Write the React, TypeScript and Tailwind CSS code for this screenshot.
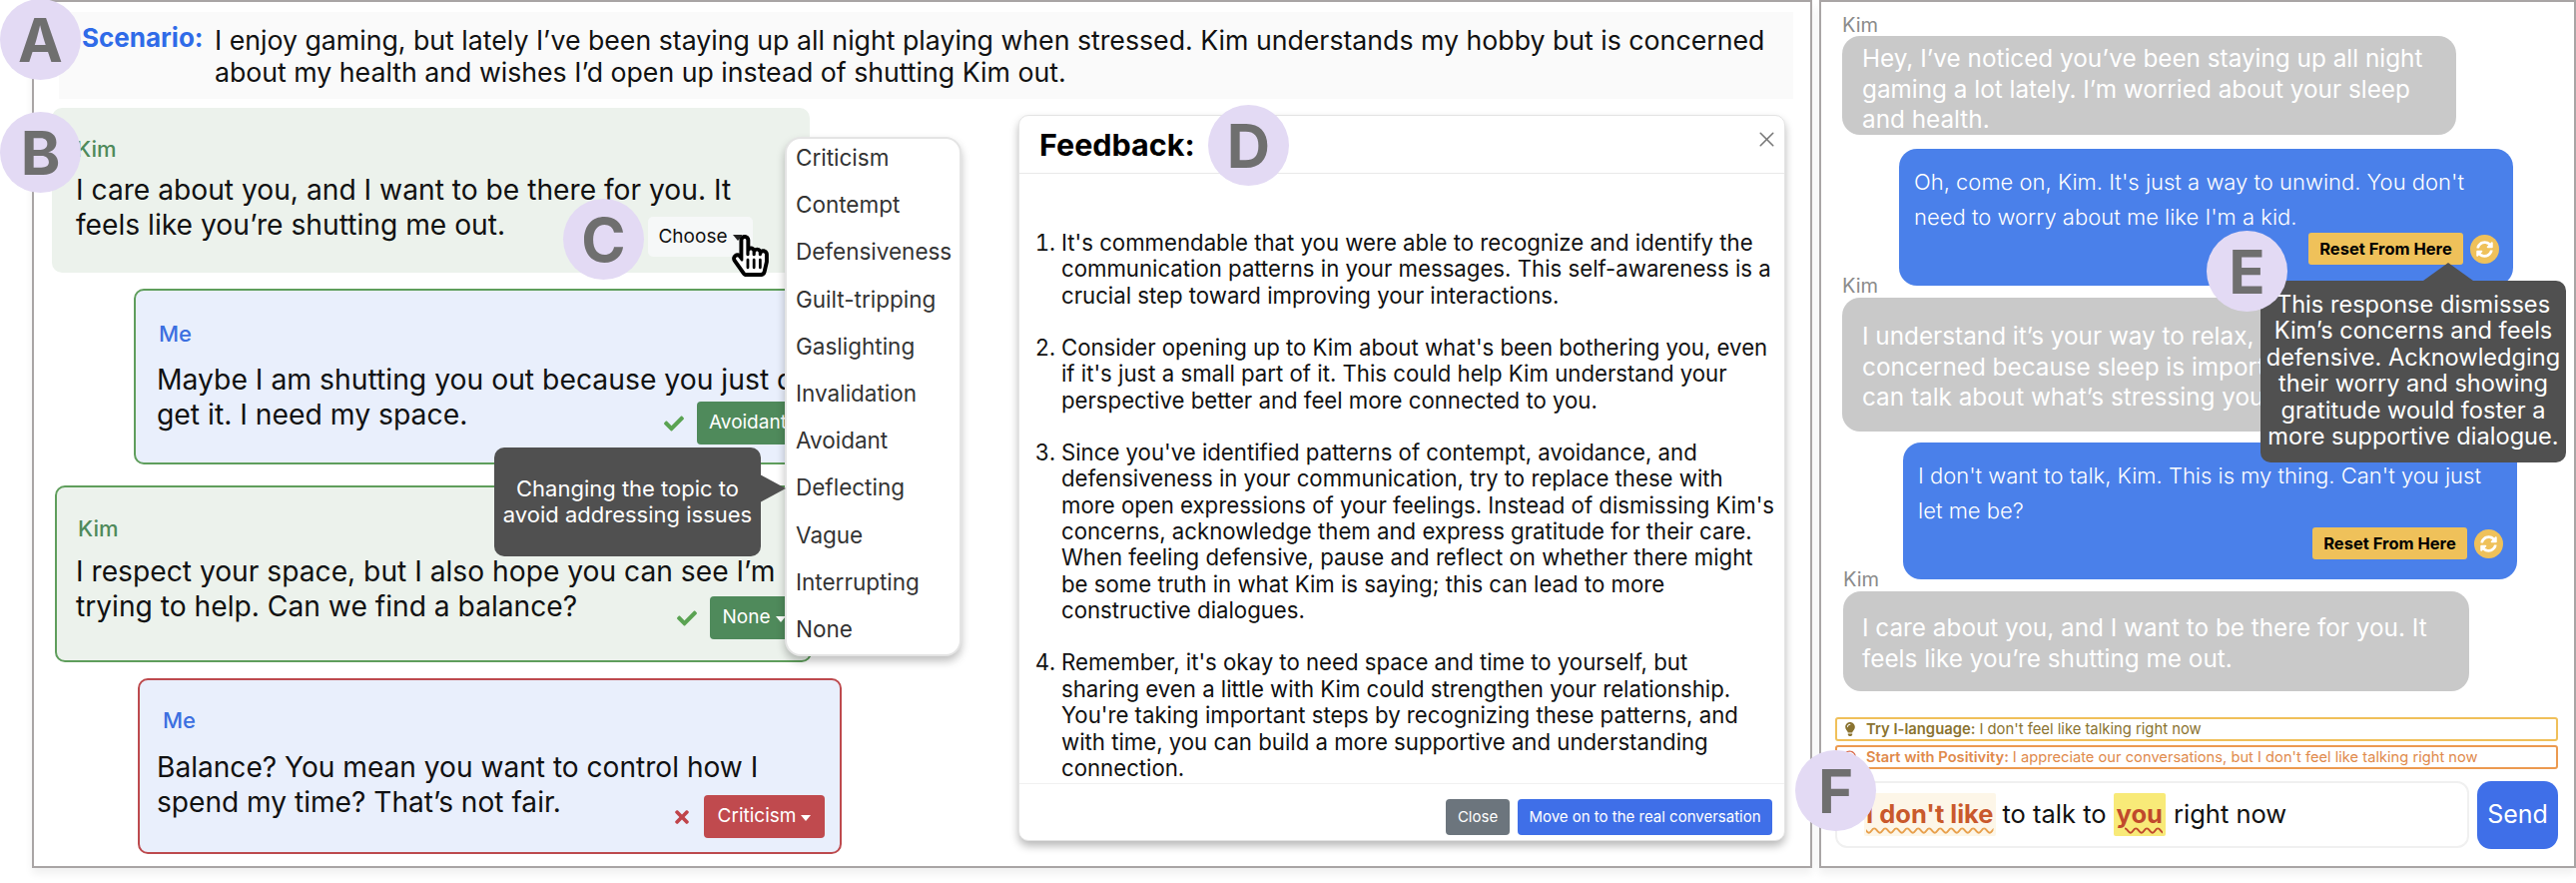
import { FaCheck, FaTimes, FaLightbulb, FaSyncAlt, FaRegSmile, FaHandPointer, FaRegHandPointer } from 'react-icons/fa'
import { X } from 'lucide-react'

const labels = ['Criticism', 'Contempt', 'Defensiveness', 'Guilt-tripping', 'Gaslighting', 'Invalidation', 'Avoidant', 'Deflecting', 'Vague', 'Interrupting', 'None']

function Badge({ letter, className }: { letter: string; className: string }) {
  return (
    <div className={`absolute z-30 flex h-[81px] w-[81px] items-center justify-center rounded-full bg-[#e3daf4] text-[60px] leading-none font-bold text-[#6f6f6f] ${className}`}>
      {letter}
    </div>
  )
}

function ResetRow({ className }: { className: string }) {
  return (
    <div className={`flex items-center justify-end gap-[7px] ${className}`}>
      <div className="flex h-[32px] w-[155px] items-center justify-center rounded-[3px] bg-[#efc15a] text-[16.5px] font-bold text-black">Reset From Here</div>
      <div className="flex h-[29px] w-[29px] items-center justify-center rounded-full bg-[#efc15a] text-white">
        <FaSyncAlt className="h-[17px] w-[17px]" />
      </div>
    </div>
  )
}

export default function App() {
  return (
    <div className="relative flex h-[884px] w-[2580px] gap-[7px] overflow-hidden bg-white pl-[32px] font-['Inter',sans-serif] text-[#111]">
      {/* Left panel: labelling and feedback */}
      <div className="flex h-[869px] w-[1783px] flex-col border-2 border-[#a9a5a5] shadow-[0_6px_8px_rgba(0,0,0,0.06)]">
        <div className="mt-[10px] ml-[25px] flex h-[87px] w-[1737px] bg-[#fafafa] pt-[12px] pl-[23px]">
          <div className="-mt-[2px] w-[133px] text-[26px] leading-[32px] font-bold text-[#2f6be8]">Scenario:</div>
          <div className="w-[1560px] text-[26.7px] leading-[32px]">
            I enjoy gaming, but lately I’ve been staying up all night playing when stressed. Kim understands my hobby but is concerned<br />about my health and wishes I’d open up instead of shutting Kim out.
          </div>
        </div>

        <div className="mt-[9px] flex">
          <div className="ml-[18px] flex w-[800px] flex-col">
            <div className="h-[165px] w-[759px] rounded-[10px] bg-[#ecf2ec] px-[24px] pt-[29px]">
              <div className="text-[22px] leading-[24px] font-medium text-[#4f8a5b]">Kim</div>
              <div className="mt-[12px] text-[28.2px] leading-[35px]">I care about you, and I want to be there for you. It<br />feels like you’re shutting me out.</div>
              <div className="-mt-[26px] flex justify-end pr-[33px]">
                <div className="flex h-[40px] w-[105px] items-center justify-center gap-[5px] rounded-[5px] bg-[#f6f8f8] text-[19px]">
                  Choose <span className="mt-[2px] border-x-[5px] border-t-[6px] border-x-transparent border-t-[#222]" />
                </div>
              </div>
            </div>

            <div className="mt-[16px] ml-[82px] h-[176px] w-[706px] rounded-[10px] border-2 border-[#5f9e5c] bg-[#e9effc] pt-[31px] pl-[21px]">
              <div className="ml-[2px] text-[22px] leading-[24px] font-medium text-[#3c6fe0]">Me</div>
              <div className="mt-[17px] text-[28.3px] leading-[35px] whitespace-nowrap">Maybe I am shutting you out because you just don’t<br />get it. I need my space.</div>
              <div className="-mt-[31px] flex items-center justify-end gap-[12px] pr-[20px]">
                <FaCheck className="h-[20px] w-[22px] text-[#5aa352]" />
                <div className="flex h-[43px] w-[120px] items-center rounded-[4px] bg-[#4f8a5b] pl-[12px] text-[19px] text-white">Avoidant</div>
              </div>
            </div>

            <div className="mt-[21px] ml-[3px] h-[177px] w-[758px] rounded-[10px] border-2 border-[#5f9e5c] bg-[#ecf2ec] pt-[29px] pl-[19px]">
              <div className="ml-[2px] text-[22px] leading-[24px] font-medium text-[#4f8a5b]">Kim</div>
              <div className="mt-[14px] text-[28.2px] leading-[35px] whitespace-nowrap">I respect your space, but I also hope you can see I’m<br />trying to help. Can we find a balance?</div>
              <div className="-mt-[28px] flex items-center justify-end gap-[12px] pr-[12px]">
                <FaCheck className="h-[20px] w-[22px] text-[#5aa352]" />
                <div className="flex h-[43px] w-[88px] items-center justify-center gap-[5px] rounded-[4px] bg-[#4f8a5b] text-[19px] text-white">
                  None <span className="mt-[2px] border-x-[5px] border-t-[6px] border-x-transparent border-t-white" />
                </div>
              </div>
            </div>

            <div className="mt-[16px] ml-[86px] h-[176px] w-[705px] rounded-[10px] border-2 border-[#bd4a4e] bg-[#e9effc] pt-[28px] pl-[17px]">
              <div className="ml-[6px] text-[22px] leading-[24px] font-medium text-[#3c6fe0]">Me</div>
              <div className="mt-[18px] text-[28.1px] leading-[35px] whitespace-nowrap">Balance? You mean you want to control how I<br />spend my time? That’s not fair.</div>
              <div className="-mt-[25px] flex items-center justify-end gap-[13px] pr-[15px]">
                <FaTimes className="h-[20px] w-[18px] text-[#c0444a]" />
                <div className="flex h-[43px] w-[121px] items-center justify-center gap-[5px] rounded-[4px] bg-[#c04a4e] text-[19px] text-white">
                  Criticism <span className="mt-[2px] border-x-[5px] border-t-[6px] border-x-transparent border-t-white" />
                </div>
              </div>
            </div>
          </div>

          {/* Feedback modal */}
          <div className="mt-[7px] ml-[168px] flex h-[727px] w-[768px] flex-col rounded-[10px] border border-[#e4e4e4] bg-white shadow-[0_5px_8px_rgba(0,0,0,0.28)]">
            <div className="flex h-[58px] items-center justify-between border-b border-[#e9e9e9] pr-[5px] pl-[20px]">
              <div className="text-[30.5px] font-bold text-black">Feedback:</div>
              <X className="-mt-[10px] h-[25px] w-[25px] text-[#777]" strokeWidth={1.5} />
            </div>
            <ol className="h-[610px] list-decimal pt-[56px] pr-[4px] pl-[42px] text-[22.2px] leading-[26.35px]">
              <li className="mb-[26px]">It's commendable that you were able to recognize and identify the communication patterns in your messages. This self-awareness is a crucial step toward improving your interactions.</li>
              <li className="mb-[26px]">Consider opening up to Kim about what's been bothering you, even if it's just a small part of it. This could help Kim understand your perspective better and feel more connected to you.</li>
              <li className="mb-[26px]">Since you've identified patterns of contempt, avoidance, and defensiveness in your communication, try to replace these with more open expressions of your feelings. Instead of dismissing Kim's concerns, acknowledge them and express gratitude for their care. When feeling defensive, pause and reflect on whether there might be some truth in what Kim is saying; this can lead to more constructive dialogues.</li>
              <li>Remember, it's okay to need space and time to yourself, but<br />sharing even a little with Kim could strengthen your relationship.<br />You're taking important steps by recognizing these patterns, and<br />with time, you can build a more supportive and understanding<br />connection.</li>
            </ol>
            <div className="flex flex-1 items-start justify-end gap-[8px] border-t border-[#f1f1f1] pt-[15px] pr-[12px]">
              <div className="flex h-[36px] w-[64px] items-center justify-center rounded-[4px] bg-[#6c757d] text-[15px] text-white">Close</div>
              <div className="flex h-[36px] w-[255px] items-center justify-center rounded-[4px] bg-[#3f6fe8] text-[15px] text-white">Move on to the real conversation</div>
            </div>
          </div>
        </div>
      </div>

      {/* Right panel: live conversation */}
      <div className="flex h-[869px] w-[758px] flex-col border-2 border-[#a9a5a5] pl-[21px] shadow-[0_6px_8px_rgba(0,0,0,0.06)]">
        <div className="mt-[11px] text-[20px] leading-[24px] text-[#8b8b8b]">Kim</div>
        <div className="mt-[-1px] h-[99px] w-[615px] rounded-[18px] bg-[#c9c9c9] pt-[7px] pl-[20px] text-[24.3px] leading-[30.5px] text-white">
          Hey, I’ve noticed you’ve been staying up all night<br />gaming a lot lately. I’m worried about your sleep<br />and health.
        </div>
        <div className="mt-[14px] ml-[57px] h-[137px] w-[615px] rounded-[18px] bg-[#4a80ea] pt-[16px] pl-[15px] text-[22px] leading-[35px] font-light text-white">
          Oh, come on, Kim. It's just a way to unwind. You don't<br />need to worry about me like I'm a kid.
          <ResetRow className="mt-[-2px] pr-[14px]" />
        </div>
        <div className="mt-[-12px] text-[20px] leading-[24px] text-[#8b8b8b]">Kim</div>
        <div className="h-[134px] w-[615px] rounded-[18px] bg-[#c9c9c9] pt-[23px] pl-[20px] text-[24.3px] leading-[30.5px] text-white">
          I understand it’s your way to relax, but I’m really<br />concerned because sleep is important. Maybe we<br />can talk about what’s stressing you?
        </div>
        <div className="mt-[11px] ml-[61px] h-[137px] w-[615px] rounded-[18px] bg-[#4a80ea] pt-[16px] pl-[15px] text-[22px] leading-[35px] font-light text-white">
          I don't want to talk, Kim. This is my thing. Can't you just<br />let me be?
          <ResetRow className="mt-[-1px] pr-[14px]" />
        </div>
        <div className="mt-[-12px] ml-[1px] text-[20px] leading-[24px] text-[#8b8b8b]">Kim</div>
        <div className="ml-[1px] h-[100px] w-[627px] rounded-[18px] bg-[#c9c9c9] pt-[21px] pl-[19px] text-[24.3px] leading-[30.5px] text-white">
          I care about you, and I want to be there for you. It<br />feels like you’re shutting me out.
        </div>

        <div className="mt-[26px] -ml-[7px] flex h-[24px] w-[724px] items-center rounded-[3px] border-2 border-[#f0c05a] pl-[7px] text-[14.8px] text-[#8a7330]">
          <FaLightbulb className="mr-[10px] h-[14px] w-[12px]" />
          <b className="mr-[4px] font-semibold">Try I-language:</b> I don't feel like talking right now
        </div>
        <div className="mt-[4px] -ml-[7px] flex h-[24px] w-[724px] items-center rounded-[3px] border-2 border-[#ec9a50] pl-[6px] text-[14.7px] text-[#e08a4c]">
          <FaRegSmile className="mr-[10px] h-[14px] w-[13px] text-[#d9694a]" />
          <b className="mr-[4px] font-semibold">Start with Positivity:</b> I appreciate our conversations, but I don't feel like talking right now
        </div>
        <div className="mt-[12px] -ml-[7px] flex gap-[8px]">
          <div className="flex h-[67px] w-[635px] items-center rounded-[12px] border-2 border-[#f0f0f0] pl-[27px] text-[25.5px]">
            <span className="rounded-[2px] bg-[#fdf6e8] px-[2px] py-[2px] font-bold text-[#c9592c] underline decoration-[#e8a04c] decoration-wavy decoration-2 underline-offset-4">I don't like</span>
            <span className="mx-[7px]">to talk to</span>
            <span className="rounded-[2px] bg-[#f8ea78] px-[3px] py-[2px] font-bold text-[#c0492c] underline decoration-[#c0492c] decoration-wavy decoration-2 underline-offset-4">you</span>
            <span className="ml-[8px]">right now</span>
          </div>
          <div className="flex h-[68px] w-[81px] items-center justify-center rounded-[14px] bg-[#3f6fe8] text-[25px] text-white">Send</div>
        </div>
      </div>

      {/* Dropdown menu over the chat column */}
      <div className="absolute top-[137px] left-[786px] z-10 h-[520px] w-[177px] rounded-[16px] border-2 border-[#e4e4e4] bg-white pl-[9px] text-[22.5px] leading-[47.2px] text-[#333] shadow-[0_5px_8px_rgba(0,0,0,0.25)]">
        <div className="-mt-[5px] flex flex-col">
          {labels.map((label) => (
            <div key={label}>{label}</div>
          ))}
        </div>
      </div>

      {/* Tooltips */}
      <div className="absolute top-[448px] left-[495px] z-20 h-[109px] w-[267px] rounded-[10px] bg-[#505050] pt-[28px] text-center text-[22px] leading-[26px] text-white">
        Changing the topic to<br />avoid addressing issues
        <span className="absolute top-[27px] left-[266px] border-y-[14px] border-l-[26px] border-y-transparent border-l-[#505050]" />
      </div>
      <div className="absolute top-[281px] left-[2264px] z-20 h-[182px] w-[306px] rounded-[10px] bg-[#505050] pt-[11px] text-center text-[23.6px] leading-[26.4px] text-white">
        This response dismisses<br />Kim’s concerns and feels<br />defensive. Acknowledging<br />their worry and showing<br />gratitude would foster a<br />more supportive dialogue.
        <span className="absolute top-[-18px] left-[163px] border-x-[25px] border-b-[18px] border-x-transparent border-b-[#505050]" />
      </div>

      {/* Hand cursor */}
      <div className="absolute top-[235px] left-[733px] z-20 h-[42px] w-[37px]">
        <FaHandPointer className="absolute inset-0 h-full w-full text-white" />
        <FaRegHandPointer className="absolute inset-0 h-full w-full text-black" />
      </div>

      <Badge letter="A" className="top-[-1px] left-0" />
      <Badge letter="B" className="top-[112px] left-0" />
      <Badge letter="C" className="top-[199px] left-[564px]" />
      <Badge letter="D" className="top-[105px] left-[1210px]" />
      <Badge letter="E" className="top-[231px] left-[2210px]" />
      <Badge letter="F" className="top-[751px] left-[1798px]" />
    </div>
  )
}
